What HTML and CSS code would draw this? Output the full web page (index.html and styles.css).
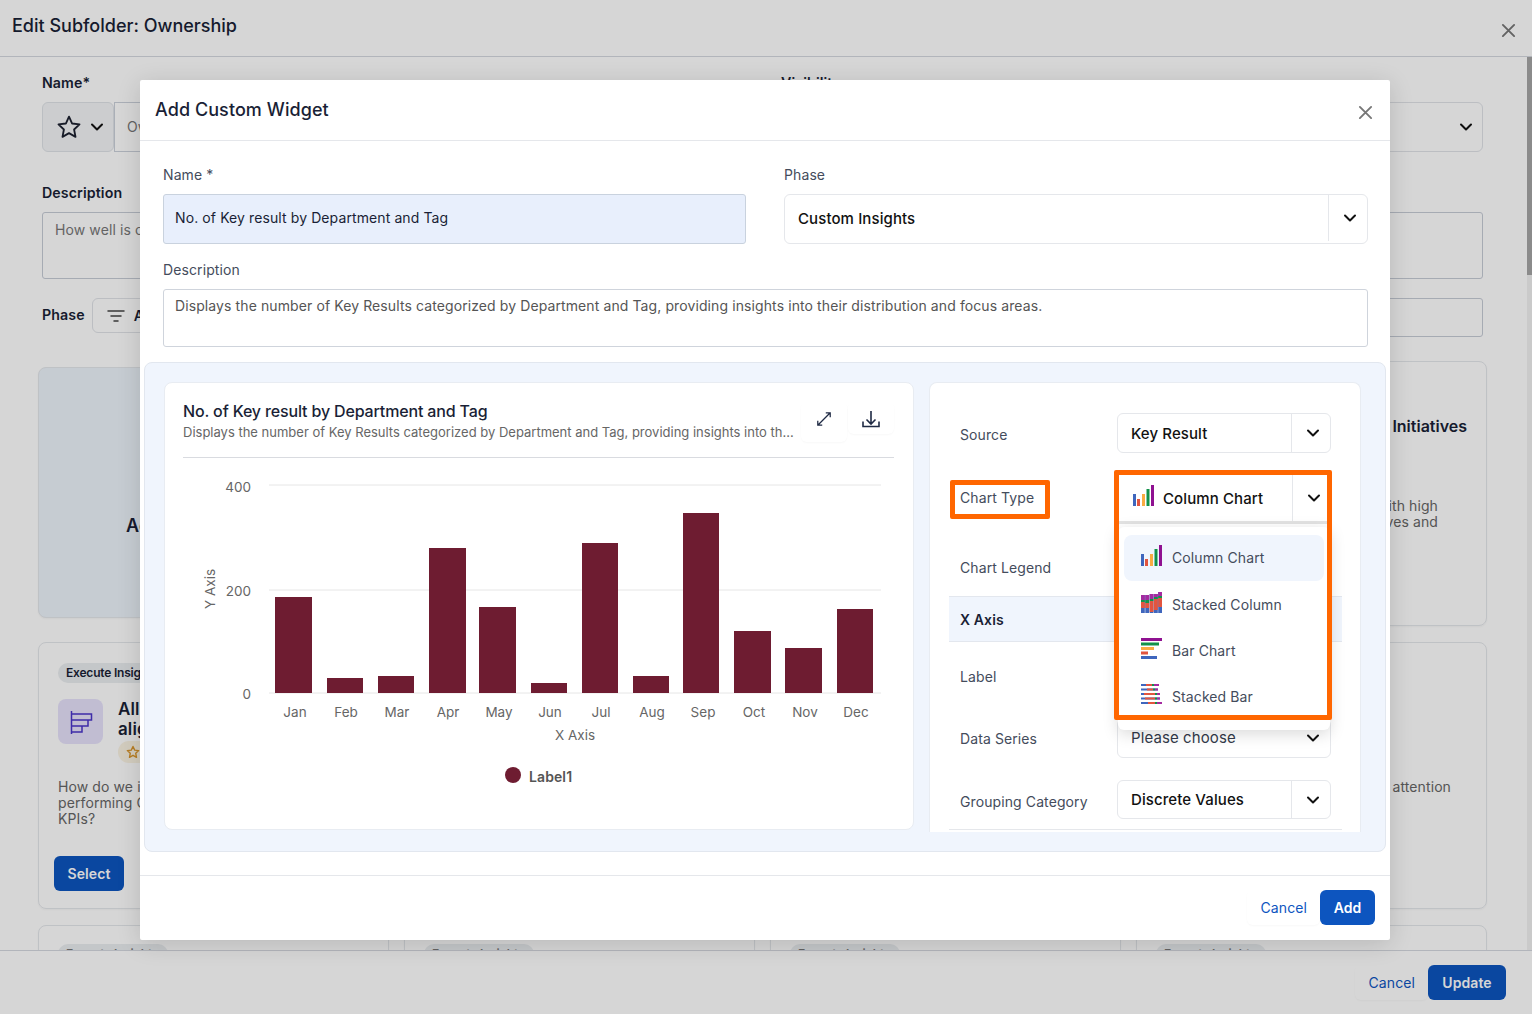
FILE: index.html
```html
<!DOCTYPE html>
<html lang="en">
<head>
    <meta charset="UTF-8">
    <meta name="viewport" content="width=device-width, initial-scale=1.0">
    <title>Edit Subfolder: Ownership</title>
    <link rel="stylesheet" href="styles.css">
</head>
<body>
    <svg class="icon-defs" width="0" height="0">
        <defs>
            <symbol id="chev" viewBox="0 0 14 14">
                <path d="M2 4.500l5 5 5-5" fill="none" stroke="currentColor" stroke-width="2" stroke-linecap="round" stroke-linejoin="round"/>
            </symbol>
            <symbol id="close" viewBox="0 0 16 16">
                <path d="M2 2l12 12M14 2L2 14" fill="none" stroke="currentColor" stroke-width="2" stroke-linecap="round"/>
            </symbol>
            <symbol id="column-chart" viewBox="0 0 21 21">
                <rect x="0" y="9" width="3" height="12" fill="#3f66bd"/>
                <rect x="4" y="14" width="3" height="7" fill="#e2553f"/>
                <rect x="9" y="9" width="3" height="12" fill="#f9ab42"/>
                <rect x="13.500" y="4" width="3" height="17" fill="#12914a"/>
                <rect x="18" y="0" width="3" height="21" fill="#8f1191"/>
            </symbol>
            <symbol id="stacked-column" viewBox="0 0 21 21">
                <path d="M0 3h3.800v18H0zM4.300 3h3.800v18H4.300zM8.700 2h3.800v19H8.700zM13 2h3.800v19H13zM17.200 0h3.800v21h-3.800z" fill="#3f66bd"/>
                <path d="M0 10h3.800v6H0zM4.300 11h3.800v5H4.300zM8.700 9h3.800v11H8.700zM13 7h3.800v11H13zM17.200 6h3.800v9h-3.800z" fill="#e2553f"/>
                <path d="M0 8h3.800v2H0zM4.300 8h3.800v3H4.300zM8.700 7h3.800v2H8.700zM13 5h3.800v2H13zM17.200 4h3.800v2h-3.800z" fill="#12914a"/>
                <path d="M0 3h3.800v5H0zM4.300 3h3.800v5H4.300zM8.700 2h3.800v5H8.700zM13 2h3.800v3H13zM17.200 0h3.800v4h-3.800z" fill="#a52aa0"/>
            </symbol>
            <symbol id="bar-chart" viewBox="0 0 21 21">
                <rect x="0" y="0" width="21" height="3" fill="#8f1191"/>
                <rect x="0" y="4.500" width="18" height="3" fill="#12914a"/>
                <rect x="0" y="9" width="13" height="3" fill="#f9ab42"/>
                <rect x="0" y="13.500" width="7" height="3" fill="#e2553f"/>
                <rect x="0" y="18" width="16" height="3" fill="#3f66bd"/>
            </symbol>
            <symbol id="stacked-bar" viewBox="0 0 21 21">
                <path d="M0 0h18v2H0zM0 4.500h17v2H0zM0 9h19v2H0zM0 13.500h19v2H0zM0 18h21v2H0z" fill="#3f66bd"/>
                <path d="M5 0h6v2H5zM6 4.500h6v2H6zM3 9h11v2H3zM4 13.500h10v2H4zM7 18h7v2H7z" fill="#e2553f"/>
                <path d="M11 0h2v2h-2zM12 4.500h2v2h-2zM14 9h2v2h-2zM14 13.500h2v2h-2zM14 18h2v2h-2z" fill="#12914a"/>
                <path d="M13 0h5v2h-5zM14 4.500h3v2h-3zM16 9h3v2h-3zM16 13.500h3v2h-3zM16 18h5v2h-5z" fill="#a52aa0"/>
            </symbol>
        </defs>
    </svg>

    <div class="page">
        <header class="page-header">
            <h1>Edit Subfolder: Ownership</h1>
            <svg class="close-icon"><use href="#close"/></svg>
        </header>

        <div class="page-scroll">
            <div class="page-form">
                <div class="form-grid">
                    <div>
                        <label class="bg-label">Name*</label>
                        <div class="name-field">
                            <div class="icon-picker">
                                <svg class="star" viewBox="0 0 24 24"><path d="M12 2.500l2.900 6.300 6.800.8-5 4.700 1.300 6.800-6-3.400-6 3.400 1.300-6.800-5-4.700 6.800-.8z" fill="none" stroke="#1c2130" stroke-width="1.700" stroke-linejoin="round"/></svg>
                                <svg class="chev"><use href="#chev"/></svg>
                            </div>
                            <div class="bg-input">Ownership</div>
                        </div>
                    </div>
                    <div>
                        <label class="bg-label">Visibility</label>
                        <div class="bg-select">
                            <svg class="chev"><use href="#chev"/></svg>
                        </div>
                    </div>
                </div>

                <label class="bg-label desc-label">Description</label>
                <div class="bg-textarea">How well is ownership defined across the organisation?</div>

                <div class="phase-row">
                    <label class="bg-label">Phase</label>
                    <div class="phase-filter">
                        <svg class="filter-icon" viewBox="0 0 18 14"><path d="M1 2h16M4 7h10M7 12h4" fill="none" stroke="#444" stroke-width="1.500" stroke-linecap="round"/></svg>
                        <span>All</span>
                    </div>
                    <div class="phase-search"></div>
                </div>

                <div class="card-grid">
                    <div class="card card-selected">
                        <div class="card-big-title">Accountability</div>
                    </div>
                    <div class="card"></div>
                    <div class="card"></div>
                    <div class="card card-end">
                        <div class="card-end-title">Initiatives</div>
                        <div class="card-end-text">ith high<br>ves and</div>
                    </div>

                    <div class="card card-tall">
                        <span class="pill">Execute Insights</span>
                        <div class="insight-head">
                            <div class="insight-icon">
                                <svg viewBox="0 0 24 24" width="24" height="24"><path d="M2.500 1v23M2.500 4h20v6h-20M19 10v6H2.500M13 16v6H2.500" fill="none" stroke="#4a35c9" stroke-width="1.500"/></svg>
                            </div>
                            <div>
                                <div class="insight-title">All OKRs<br>aligned</div>
                                <span class="star-badge">
                                    <svg viewBox="0 0 24 24" width="14" height="14"><path d="M12 2.500l2.900 6.300 6.800.8-5 4.700 1.300 6.800-6-3.400-6 3.400 1.300-6.800-5-4.700 6.800-.8z" fill="none" stroke="#d9962c" stroke-width="2.400" stroke-linejoin="round"/></svg>
                                </span>
                            </div>
                        </div>
                        <p class="insight-text">How do we identify under<br>performing OKRs and<br>KPIs?</p>
                        <button class="btn btn-primary btn-select">Select</button>
                    </div>
                    <div class="card card-tall"></div>
                    <div class="card card-tall"></div>
                    <div class="card card-tall card-end">
                        <div class="card-end-note">l attention</div>
                    </div>

                    <div class="card card-short"><span class="pill pill-faded">Execute Insights</span></div>
                    <div class="card card-short"><span class="pill pill-faded">Execute Insights</span></div>
                    <div class="card card-short"><span class="pill pill-faded">Execute Insights</span></div>
                    <div class="card card-short"><span class="pill pill-faded">Execute Insights</span></div>
                </div>
            </div>
            <div class="scrollbar"><div class="scrollbar-thumb"></div></div>
        </div>

        <footer class="page-footer">
            <button class="btn btn-link">Cancel</button>
            <button class="btn btn-primary">Update</button>
        </footer>
    </div>

    <div class="backdrop"></div>

    <div class="modal">
        <div class="modal-header">
            <h2>Add Custom Widget</h2>
            <svg class="modal-close"><use href="#close"/></svg>
        </div>

        <div class="modal-body">
            <div class="widget-form">
                <div class="widget-grid">
                    <div>
                        <label class="field-label">Name *</label>
                        <div class="name-input">No. of Key result by Department and Tag</div>
                    </div>
                    <div>
                        <label class="field-label">Phase</label>
                        <div class="select select-phase">
                            <span class="select-value">Custom Insights</span>
                            <span class="select-caret"><svg class="chev"><use href="#chev"/></svg></span>
                        </div>
                    </div>
                </div>
                <label class="field-label desc-field-label">Description</label>
                <div class="desc-input">Displays the number of Key Results categorized by Department and Tag, providing insights into their distribution and focus areas.</div>
            </div>

            <div class="builder">
                <div class="chart-card">
                    <div class="chart-head">
                        <div class="chart-head-text">
                            <div class="chart-title">No. of Key result by Department and Tag</div>
                            <div class="chart-sub">Displays the number of Key Results categorized by Department and Tag, providing insights into th...</div>
                        </div>
                        <span class="tool-btn tool-expand">
                            <svg viewBox="0 0 18 18" width="16" height="16"><path d="M11 2h5v5M16 2L2 16M2 11v5h5" fill="none" stroke="#1f2a44" stroke-width="1.400"/></svg>
                        </span>
                        <span class="tool-btn">
                            <svg viewBox="0 0 18 18" width="18" height="18"><path d="M9 1v13M4.500 9.500L9 14l4.500-4.500M1 11.500V16.500h16V11.500" fill="none" stroke="#1f2a44" stroke-width="1.600"/></svg>
                        </span>
                    </div>
                    <svg class="chart" viewBox="164 460 750 360" width="750" height="360">
                        <g class="grid-lines">
                            <line x1="269" x2="881" y1="485" y2="485"/>
                            <line x1="269" x2="881" y1="590" y2="590"/>
                            <line x1="269" x2="881" y1="693" y2="693"/>
                        </g>
                        <g class="tick" text-anchor="end">
                            <text x="251" y="492">400</text>
                            <text x="251" y="596">200</text>
                            <text x="251" y="699">0</text>
                        </g>
                        <text class="tick" transform="translate(215 589) rotate(-90)" text-anchor="middle">Y Axis</text>
                        <g class="bars">
                            <rect x="275" y="597" width="37" height="96"/>
                            <rect x="327" y="678" width="36" height="15"/>
                            <rect x="378" y="676" width="36" height="17"/>
                            <rect x="429" y="548" width="37" height="145"/>
                            <rect x="479" y="607" width="37" height="86"/>
                            <rect x="531" y="683" width="36" height="10"/>
                            <rect x="582" y="543" width="36" height="150"/>
                            <rect x="633" y="676" width="36" height="17"/>
                            <rect x="683" y="513" width="36" height="180"/>
                            <rect x="734" y="631" width="37" height="62"/>
                            <rect x="785" y="648" width="37" height="45"/>
                            <rect x="837" y="609" width="36" height="84"/>
                        </g>
                        <g class="tick" text-anchor="middle">
                            <text x="295" y="717">Jan</text>
                            <text x="346" y="717">Feb</text>
                            <text x="397" y="717">Mar</text>
                            <text x="448" y="717">Apr</text>
                            <text x="499" y="717">May</text>
                            <text x="550" y="717">Jun</text>
                            <text x="601" y="717">Jul</text>
                            <text x="652" y="717">Aug</text>
                            <text x="703" y="717">Sep</text>
                            <text x="754" y="717">Oct</text>
                            <text x="805" y="717">Nov</text>
                            <text x="856" y="717">Dec</text>
                            <text x="575" y="740">X Axis</text>
                        </g>
                        <circle cx="513" cy="775" r="8" fill="#6e1c31"/>
                        <text class="legend-text" x="529" y="782">Label1</text>
                    </svg>
                </div>

                <div class="config-card">
                    <div class="config-row">
                        <span class="config-label">Source</span>
                        <div class="select">
                            <span class="select-value">Key Result</span>
                            <span class="select-caret"><svg class="chev"><use href="#chev"/></svg></span>
                        </div>
                    </div>
                    <div class="config-row row-type">
                        <span class="config-label">Chart Type<span class="mark mark-label"></span></span>
                        <div class="select select-type">
                            <span class="select-value">
                                <svg class="type-icon"><use href="#column-chart"/></svg>
                                Column Chart
                            </span>
                            <span class="select-caret"><svg class="chev"><use href="#chev"/></svg></span>
                            <div class="menu">
                                <div class="menu-item active"><svg class="type-icon"><use href="#column-chart"/></svg><span>Column Chart</span></div>
                                <div class="menu-item"><svg class="type-icon"><use href="#stacked-column"/></svg><span>Stacked Column</span></div>
                                <div class="menu-item"><svg class="type-icon"><use href="#bar-chart"/></svg><span>Bar Chart</span></div>
                                <div class="menu-item"><svg class="type-icon"><use href="#stacked-bar"/></svg><span>Stacked Bar</span></div>
                            </div>
                            <span class="mark mark-select"></span>
                        </div>
                    </div>
                    <div class="config-row row-legend">
                        <span class="config-label">Chart Legend</span>
                    </div>
                    <div class="config-section">X Axis</div>
                    <div class="config-row row-axis-label">
                        <span class="config-label">Label</span>
                    </div>
                    <div class="config-row row-series">
                        <span class="config-label">Data Series</span>
                        <div class="select select-plain">
                            <span class="select-value">Please choose</span>
                            <span class="select-caret"><svg class="chev"><use href="#chev"/></svg></span>
                        </div>
                    </div>
                    <div class="config-row row-group">
                        <span class="config-label">Grouping Category</span>
                        <div class="select">
                            <span class="select-value">Discrete Values</span>
                            <span class="select-caret"><svg class="chev"><use href="#chev"/></svg></span>
                        </div>
                    </div>
                </div>
            </div>
        </div>

        <div class="modal-footer">
            <button class="btn btn-link">Cancel</button>
            <button class="btn btn-primary">Add</button>
        </div>
    </div>
</body>
</html>
```

FILE: styles.css
```css
* {
    box-sizing: border-box;
}

html,
body {
    margin: 0;
    height: 100%;
    overflow: hidden;
}

body {
    font-family: Inter, "Liberation Sans", sans-serif;
    font-size: 14px;
    letter-spacing: 0.1px;
    color: #1a1f36;
    background: #fff;
}

.icon-defs {
    position: absolute;
}

.page {
    width: 1532px;
    height: 1014px;
    display: flex;
    flex-direction: column;
    overflow: hidden;
}

.page-header {
    height: 57px;
    flex: none;
    display: flex;
    align-items: center;
    justify-content: space-between;
    padding: 0 16px 6px 12px;
    border-bottom: 1px solid #d4d8df;
}

.page-header h1 {
    margin: 0;
    font-size: 18px;
    font-weight: 500;
    letter-spacing: 0;
}

.close-icon {
    width: 15px;
    height: 15px;
    margin-top: 10px;
    color: #777;
}

.page-scroll {
    flex: 1;
    min-height: 0;
    display: flex;
    overflow: hidden;
}

.page-form {
    flex: 1;
    padding: 17px 44px 0 42px;
    overflow: hidden;
}

.scrollbar {
    width: 5px;
    flex: none;
    background: #f1f1f1;
}

.scrollbar-thumb {
    height: 218px;
    background: #a6a6a6;
}

.form-grid {
    display: grid;
    grid-template-columns: 701px 702px;
    column-gap: 38px;
}

.bg-label {
    display: block;
    font-size: 14.200px;
    font-weight: 600;
    line-height: 17px;
    margin-bottom: 11px;
}

.name-field {
    display: flex;
    height: 50px;
}

.icon-picker {
    width: 72px;
    display: flex;
    align-items: center;
    justify-content: center;
    gap: 8px;
    padding-left: 4px;
    background: #f4f5f7;
    border: 1px solid #dfe3e8;
    border-radius: 6px;
}

.star {
    width: 26px;
    height: 26px;
}

.chev {
    width: 14px;
    height: 14px;
    color: #111;
    display: block;
}

.bg-input {
    flex: 1;
    border: 1px solid #cbd1da;
    padding-left: 12px;
    line-height: 48px;
    color: #777;
}

.bg-select {
    height: 50px;
    display: flex;
    align-items: center;
    justify-content: flex-end;
    padding-right: 9px;
    border: 1px solid #e0e3e8;
    border-radius: 6px;
}

.desc-label {
    margin: 32px 0 11px;
}

.bg-textarea {
    height: 67px;
    padding: 8px 12px;
    border: 1px solid #c6ccd6;
    border-radius: 3px;
    color: #777;
}

.phase-row {
    display: flex;
    align-items: flex-start;
    margin-top: 19px;
    height: 39px;
}

.phase-row .bg-label {
    margin: 8px 7px 0 0;
}

.phase-filter {
    width: 121px;
    height: 35px;
    display: flex;
    align-items: center;
    gap: 9px;
    padding-left: 14px;
    border: 1px solid #e0e3e8;
    border-radius: 6px;
    font-weight: 600;
}

.filter-icon {
    width: 18px;
    height: 14px;
}

.phase-search {
    flex: 1;
    height: 39px;
    border: 1px solid #c6ccd6;
    border-radius: 3px;
}

.card-grid {
    display: grid;
    grid-template-columns: repeat(4, 351px);
    grid-auto-rows: min-content;
    column-gap: 15px;
    row-gap: 16px;
    margin: 24px 0 0 -4px;
}

.card {
    height: 265px;
    position: relative;
    border: 1px solid #e4e7eb;
    border-radius: 8px;
    box-shadow: 0 1px 2px rgba(0, 0, 0, 0.04);
}

.card-selected {
    height: 251px;
    margin-top: 6px;
    background: #ecf3fb;
    display: flex;
    align-items: center;
    padding: 65px 0 0 87px;
}

.card-big-title {
    font-size: 18px;
    font-weight: 600;
}

.card-end {
    text-align: right;
    padding-right: 19px;
}

.card-end-title {
    margin-top: 54px;
    font-size: 16px;
    font-weight: 600;
    letter-spacing: 0;
}

.card-end-text {
    margin-top: 62px;
    padding-right: 29px;
    line-height: 16px;
    color: #666;
}

.card-end-note {
    margin-top: 135px;
    padding-right: 16px;
    color: #666;
}

.card-tall {
    height: 267px;
    padding: 20px 19px;
}

.card-tall.card-end {
    padding: 0 19px 0 0;
}

.card-short {
    height: 60px;
    padding: 18px 19px;
}

.pill {
    display: inline-block;
    height: 20px;
    padding: 0 8px;
    line-height: 20px;
    font-size: 12px;
    font-weight: 600;
    letter-spacing: -0.2px;
    white-space: nowrap;
    background: #eaedf0;
    border-radius: 10px;
}

.pill-faded {
    width: 110px;
    color: #777;
}

.insight-head {
    display: flex;
    gap: 15px;
    margin-top: 16px;
}

.insight-icon {
    width: 45px;
    height: 45px;
    flex: none;
    display: flex;
    align-items: center;
    justify-content: center;
    background: #e6e2fb;
    border-radius: 8px;
}

.insight-title {
    font-size: 17px;
    font-weight: 600;
    line-height: 20px;
}

.star-badge {
    display: flex;
    align-items: center;
    width: 60px;
    height: 22px;
    padding-left: 8px;
    margin-top: 2px;
    background: #fbf3e3;
    border-radius: 11px;
}

.insight-text {
    margin: 16px 0 0;
    line-height: 16px;
    color: #666;
}

.btn {
    font-family: inherit;
    font-size: 14px;
    font-weight: 600;
    letter-spacing: 0.1px;
    border: none;
    cursor: pointer;
    background: none;
}

.btn-primary {
    height: 35px;
    padding: 0 14px;
    color: #fff;
    background: #0d55bf;
    border-radius: 6px;
}

.btn-link {
    height: 35px;
    padding: 0 13px;
    color: #0d55bf;
    font-weight: 400;
    border-radius: 6px;
    box-shadow: 0 1px 2px rgba(0, 0, 0, 0.03);
}

.btn-select {
    position: absolute;
    left: 15px;
    top: 213px;
    width: 70px;
    padding: 0;
}

.page-footer {
    height: 64px;
    flex: none;
    display: flex;
    align-items: center;
    justify-content: flex-end;
    padding-right: 26px;
    background: #fff;
    border-top: 1px solid #d4d8df;
}

.page-footer .btn-primary {
    width: 78px;
    padding: 0;
}

.backdrop {
    position: absolute;
    inset: 0;
    background: rgba(0, 0, 0, 0.16);
}

.modal {
    position: absolute;
    left: 140px;
    top: 80px;
    width: 1250px;
    height: 860px;
    display: flex;
    flex-direction: column;
    background: #fff;
    border-radius: 2px;
    box-shadow: 0 4px 24px rgba(0, 0, 0, 0.14);
}

.modal-header {
    height: 61px;
    flex: none;
    display: flex;
    align-items: center;
    justify-content: space-between;
    padding: 0 17px 2px 15px;
    border-bottom: 1px solid #e5e7eb;
}

.modal-header h2 {
    margin: 0;
    font-size: 18px;
    font-weight: 500;
    letter-spacing: 0.07px;
}

.modal-close {
    width: 15px;
    height: 15px;
    margin-top: 6px;
    color: #777;
}

.modal-body {
    flex: 1;
    min-height: 0;
    padding: 0 4px;
}

.widget-form {
    padding: 25px 18px 0 19px;
}

.widget-grid {
    display: grid;
    grid-template-columns: 583px 584px;
    column-gap: 38px;
}

.field-label {
    display: block;
    line-height: 17px;
    margin-bottom: 11px;
    color: #444c5c;
}

.name-input {
    height: 50px;
    padding-left: 11px;
    line-height: 46px;
    background: #e8effc;
    border: 1px solid #c9d2de;
    border-radius: 3px;
}

.desc-field-label {
    margin-top: 17px;
}

.desc-input {
    height: 58px;
    padding: 7px 11px;
    line-height: 17px;
    color: #555;
    border: 1px solid #cfd4dc;
    border-radius: 3px;
}

.builder {
    height: 490px;
    margin-top: 15px;
    padding: 20px 25px 0 20px;
    display: flex;
    gap: 16px;
    align-items: flex-start;
    background: #f0f5fd;
    border: 1px solid #e2e7ef;
    border-radius: 8px;
}

.chart-card {
    width: 750px;
    height: 448px;
    flex: none;
    margin: -1px 0 0 -1px;
    background: #fff;
    border: 1px solid #e8ecf2;
    border-radius: 8px;
}

.chart-head {
    display: flex;
    margin: 0 19px 0 18px;
    height: 75px;
    padding-top: 19px;
    border-bottom: 1px solid #d9dbe0;
}

.chart-head-text {
    width: 611px;
    flex: none;
}

.chart-title {
    font-size: 16px;
    font-weight: 500;
    line-height: 19px;
    letter-spacing: -0.15px;
}

.chart-sub {
    margin-top: 3px;
    font-size: 13px;
    line-height: 17px;
    letter-spacing: 0;
    color: #666;
    white-space: nowrap;
    overflow: hidden;
}

.tool-btn {
    width: 46px;
    height: 32px;
    display: flex;
    justify-content: center;
    padding-top: 8px;
    border-radius: 6px;
    box-shadow: 0 1px 2px rgba(0, 0, 0, 0.03);
}

.tool-expand {
    margin: 0 1px 0 7px;
    height: 40px;
    padding-top: 9px;
}

.chart {
    display: block;
    margin: 2px 0 0 -1px;
}

.grid-lines line {
    stroke: #e6e6e6;
    stroke-width: 1;
}

.tick {
    font-size: 13.500px;
    letter-spacing: 0;
    fill: #666;
}

.bars rect {
    fill: #6e1c31;
}

.legend-text {
    font-size: 14px;
    font-weight: 600;
    fill: #555;
}

.config-card {
    width: 432px;
    height: 450px;
    flex: none;
    padding: 20px 18px 0 19px;
    margin: -1px 0 0 -1px;
    background: #fff;
    border: 1px solid #e8ecf2;
    border-bottom: none;
    border-radius: 8px 8px 0 0;
}

.config-row {
    height: 60px;
    display: flex;
    align-items: center;
}

.config-label {
    width: 168px;
    flex: none;
    margin-top: 2px;
    padding-left: 11px;
    color: #444c5c;
    position: relative;
}

.select {
    width: 214px;
    height: 40px;
    display: flex;
    align-items: stretch;
    border: 1px solid #e5e7eb;
    border-radius: 6px;
    font-size: 15px;
    font-weight: 500;
    color: #111;
    background: #fff;
}

.select-value {
    flex: 1;
    display: flex;
    align-items: center;
    gap: 9px;
    padding-left: 13px;
}

.select-caret {
    width: 39px;
    flex: none;
    display: flex;
    align-items: center;
    justify-content: center;
    padding-left: 4px;
    border-left: 1px solid #e5e7eb;
}

.select-phase {
    width: 100%;
    height: 50px;
    padding-bottom: 2px;
}

.row-type {
    height: 73px;
}

.row-type .config-label {
    margin: 0 0 4px;
}

.select-type {
    position: relative;
    height: 49px;
    width: 213px;
    margin-left: 1px;
    border: none;
    border-bottom: 3px solid #e3e3e3;
    border-radius: 0;
}

.type-icon {
    width: 21px;
    height: 21px;
    flex: none;
    margin-top: -5px;
}

.select-type .select-value {
    padding-left: 15px;
}

.menu {
    position: absolute;
    left: 0;
    top: 52px;
    width: 212px;
    height: 203px;
    padding: 8px 6px;
    background: #fff;
    border-radius: 6px;
    box-shadow: 0 4px 16px rgba(0, 0, 0, 0.15);
    font-size: 14px;
    font-weight: 400;
    color: #444c5c;
    z-index: 2;
}

.menu-item {
    height: 46.400px;
    display: flex;
    align-items: center;
    gap: 10px;
    padding-left: 17px;
    border-radius: 8px;
}

.menu-item span {
    margin-top: -1px;
}

.menu-item.active {
    background: #f0f5fd;
}

.mark {
    position: absolute;
    border: 5px solid #ff6600;
    border-radius: 2px;
    z-index: 3;
}

.mark-label {
    left: 1px;
    top: -9px;
    width: 100px;
    height: 39px;
}

.mark-select {
    left: -4px;
    top: -5px;
    width: 218px;
    height: 250px;
}

.config-section {
    height: 46px;
    padding-left: 11px;
    line-height: 45px;
    font-weight: 600;
    background: #f0f5fd;
    border-top: 1px solid #e3e7ee;
    border-bottom: 1px solid #e3e7ee;
}

.row-axis-label {
    height: 66px;
}

.row-series {
    height: 62px;
}

.row-series .config-label {
    margin: 0 0 2px;
}

.select-plain {
    height: 39px;
    margin-bottom: 2px;
    font-weight: 400;
    color: #333a4a;
}

.select-plain .select-value {
    padding-bottom: 2px;
}

.select-plain .select-caret {
    border-left: none;
}

.row-group {
    border-bottom: 1px solid #e5e7eb;
}

.row-group .config-label {
    margin-top: 4px;
}

.row-group .select {
    height: 39px;
}

.modal-footer {
    height: 65px;
    flex: none;
    display: flex;
    align-items: center;
    justify-content: flex-end;
    padding: 0 15px 1px 0;
    border-top: 1px solid #e5e7eb;
}

.modal-footer .btn-primary {
    width: 55px;
    padding: 0;
}
```
